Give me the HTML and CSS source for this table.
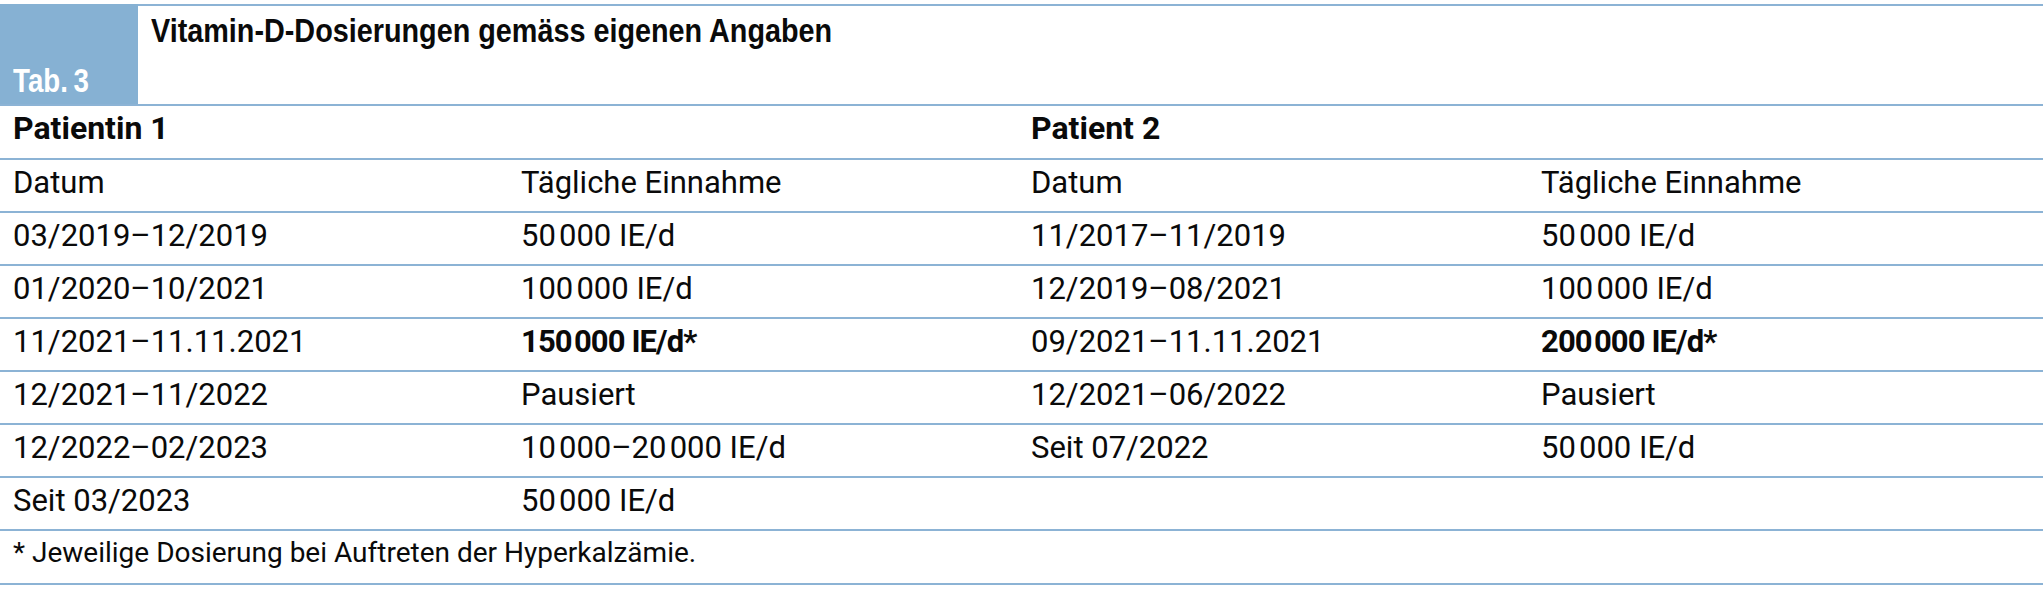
FILE: index.html
```html
<!DOCTYPE html>
<html lang="de">
<head>
<meta charset="utf-8">
<title>Tab. 3 – Vitamin-D-Dosierungen</title>
<link rel="stylesheet" href="styles.css">
</head>
<body>
<div class="table">
  <div class="caption">
    <div class="tab-label"><span class="cond">Tab.&thinsp;3</span></div>
    <div class="title"><span class="cond">Vitamin-D-Dosierungen gemäss eigenen Angaben</span></div>
  </div>

  <div class="row group">
    <div class="cell span2 bold">Patientin 1</div>
    <div class="cell span2 bold">Patient 2</div>
  </div>

  <div class="row">
    <div class="cell">Datum</div>
    <div class="cell">Tägliche Einnahme</div>
    <div class="cell">Datum</div>
    <div class="cell">Tägliche Einnahme</div>
  </div>

  <div class="row">
    <div class="cell">03/2019–12/2019</div>
    <div class="cell">50&#8202;000 IE/d</div>
    <div class="cell">11/2017–11/2019</div>
    <div class="cell">50&#8202;000 IE/d</div>
  </div>

  <div class="row">
    <div class="cell">01/2020–10/2021</div>
    <div class="cell">100&#8202;000 IE/d</div>
    <div class="cell">12/2019–08/2021</div>
    <div class="cell">100&#8202;000 IE/d</div>
  </div>

  <div class="row">
    <div class="cell">11/2021–11.11.2021</div>
    <div class="cell bold dose">150&#8202;000 IE/d*</div>
    <div class="cell">09/2021–11.11.2021</div>
    <div class="cell bold dose">200&#8202;000 IE/d*</div>
  </div>

  <div class="row">
    <div class="cell">12/2021–11/2022</div>
    <div class="cell">Pausiert</div>
    <div class="cell">12/2021–06/2022</div>
    <div class="cell">Pausiert</div>
  </div>

  <div class="row">
    <div class="cell">12/2022–02/2023</div>
    <div class="cell">10&#8202;000–20&#8202;000 IE/d</div>
    <div class="cell">Seit 07/2022</div>
    <div class="cell">50&#8202;000 IE/d</div>
  </div>

  <div class="row">
    <div class="cell">Seit 03/2023</div>
    <div class="cell">50&#8202;000 IE/d</div>
    <div class="cell"></div>
    <div class="cell"></div>
  </div>

  <div class="row foot">
    <div class="cell span4">* Jeweilige Dosierung bei Auftreten der Hyperkalzämie.</div>
  </div>
</div>
</body>
</html>
```

FILE: styles.css
```css
html, body {
  margin: 0;
  padding: 0;
  background: #ffffff;
}

body {
  font-family: Roboto, "Liberation Sans", Arial, sans-serif;
  color: #0a0a0a;
}

.table {
  width: 2043px;
  margin-top: 4px;
}

.caption {
  display: flex;
  height: 100px;
  border-bottom: 2px solid #8cb3d5;
}

.cond {
  display: inline-block;
  transform-origin: left bottom;
  white-space: nowrap;
}

.tab-label {
  width: 138px;
  box-sizing: border-box;
  background: #86b1d3;
  color: #ffffff;
  display: flex;
  align-items: flex-end;
  padding: 0 0 7px 13px;
  font-family: "Liberation Sans", Arial, sans-serif;
  font-weight: 700;
  font-size: 33px;
  line-height: 33px;
}

.tab-label .cond {
  transform: scaleX(0.84);
}

.title {
  flex: 1;
  border-top: 2px solid #8cb3d5;
  padding: 8px 0 0 13px;
  font-family: "Liberation Sans", Arial, sans-serif;
  font-weight: 700;
  font-size: 33px;
  line-height: 33px;
}

.title .cond {
  transform: scaleX(0.872);
}

.row {
  display: grid;
  grid-template-columns: 508px 510px 510px 1fr;
  height: 51px;
  border-bottom: 2px solid #8cb3d5;
  font-size: 31px;
  line-height: 45px;
}

.row.group {
  height: 52px;
  font-size: 32px;
  line-height: 44px;
}

.cell {
  padding-left: 13px;
  white-space: nowrap;
}

.span2 {
  grid-column: span 2;
}

.span4 {
  grid-column: span 4;
}

.bold {
  font-weight: 700;
}

.dose {
  font-size: 31px;
  letter-spacing: -0.9px;
}

.row.foot {
  height: 52px;
  font-size: 28px;
  line-height: 44px;
}
```
